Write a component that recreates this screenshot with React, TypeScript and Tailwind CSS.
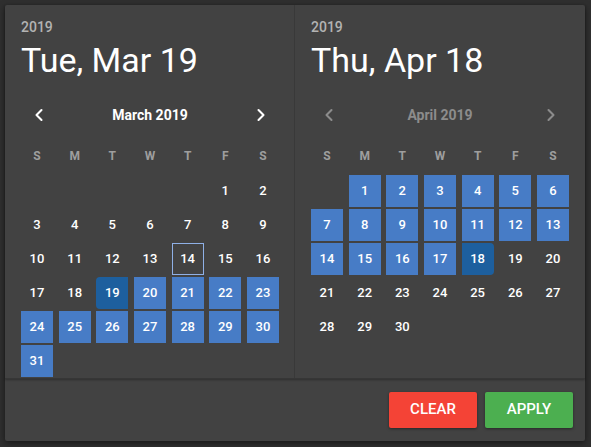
import { ChevronLeft, ChevronRight } from 'lucide-react';

type Range = { start: number; end: number; today?: number };

interface MonthPanelProps {
  year: string;
  heading: string;
  title: string;
  offset: number;
  days: number;
  range: Range;
  startIsSelected: boolean;
  muted?: boolean;
  divider?: boolean;
}

const WEEKDAYS = ['S', 'M', 'T', 'W', 'T', 'F', 'S'];

function DayCell({ day, range, startIsSelected }: { day: number; range: Range; startIsSelected: boolean }) {
  const inRange = day >= range.start && day <= range.end;
  const selected = startIsSelected ? day === range.start : day === range.end;
  const isToday = range.today === day;

  let cls = 'h-8 w-8 flex items-center justify-center text-[13px] font-medium text-white';
  if (selected) {
    cls += startIsSelected
      ? ' bg-[#1d5f9e] rounded-l-[4px]'
      : ' bg-[#1d5f9e] rounded-r-[4px]';
  } else if (inRange) {
    cls += ' bg-[#477cc6]';
  } else if (isToday) {
    cls += ' border border-[#8fb0e6]';
  }

  return <div className={cls}>{day}</div>;
}

function MonthPanel({ year, heading, title, offset, days, range, startIsSelected, muted, divider }: MonthPanelProps) {
  const navColor = muted ? 'text-[#8c8c8c]' : 'text-white';
  const cells: (number | null)[] = [
    ...Array.from({ length: offset }, () => null),
    ...Array.from({ length: days }, (_, i) => i + 1),
  ];

  return (
    <div className={`w-[290px] pl-4 pt-3 pb-[2px] ${divider ? 'border-r border-[#393939]' : ''}`}>
      <div className="text-[14px] leading-5 font-medium text-[#b3b3b3]">{year}</div>
      <div className="mt-[3px] text-[34px] leading-10 text-white">{heading}</div>

      {/* Month nav */}
      <div className={`mt-[23px] ml-[6px] w-[246px] h-6 flex items-center justify-between ${navColor}`}>
        <button type="button" className="w-6 h-6 flex items-center justify-center">
          <ChevronLeft className="w-5 h-5" strokeWidth={2.5} />
        </button>
        <span className="text-[14px] font-bold">{title}</span>
        <button type="button" className="w-6 h-6 flex items-center justify-center">
          <ChevronRight className="w-5 h-5" strokeWidth={2.5} />
        </button>
      </div>

      {/* Weekdays */}
      <div className="mt-[21px] w-[258px] grid grid-cols-[repeat(7,32px)] justify-between">
        {WEEKDAYS.map((d, i) => (
          <div key={i} className="h-4 flex items-center justify-center text-[12px] font-bold text-[#9e9e9e]">
            {d}
          </div>
        ))}
      </div>

      {/* Days */}
      <div className="mt-[11px] w-[258px] grid grid-cols-[repeat(7,32px)] justify-between gap-y-[2px]">
        {cells.map((day, i) =>
          day === null ? (
            <div key={i} className="h-8 w-8" />
          ) : (
            <DayCell key={i} day={day} range={range} startIsSelected={startIsSelected} />
          )
        )}
      </div>
    </div>
  );
}

export default function App() {
  return (
    <div className="w-[591px] h-[447px] bg-[#2f2f2f] p-[5px]" style={{ fontFamily: 'Roboto, "Liberation Sans", sans-serif' }}>
      <div className="w-[580px] h-[436px] bg-[#424242] rounded-[2px] shadow-[0_2px_6px_rgba(0,0,0,0.5)] flex flex-col">
        <div className="flex h-[374px] border-b border-[#363636] shadow-[0_1px_2px_rgba(0,0,0,0.3)]">
          <MonthPanel
            year="2019"
            heading="Tue, Mar 19"
            title="March 2019"
            offset={5}
            days={31}
            range={{ start: 19, end: 31, today: 14 }}
            startIsSelected
            divider
          />
          <MonthPanel
            year="2019"
            heading="Thu, Apr 18"
            title="April 2019"
            offset={1}
            days={30}
            range={{ start: 1, end: 18 }}
            startIsSelected={false}
            muted
          />
        </div>

        {/* Actions */}
        <div className="flex-1 flex items-center justify-end gap-2 pr-3 pb-px">
          <button
            type="button"
            className="w-[88px] h-9 rounded-[2px] bg-[#f44336] text-white text-[15px] font-medium uppercase shadow-[0_1px_3px_rgba(0,0,0,0.4)]"
          >
            Clear
          </button>
          <button
            type="button"
            className="w-[88px] h-9 rounded-[2px] bg-[#4caf50] text-white text-[15px] font-medium uppercase shadow-[0_1px_3px_rgba(0,0,0,0.4)]"
          >
            Apply
          </button>
        </div>
      </div>
    </div>
  );
}
